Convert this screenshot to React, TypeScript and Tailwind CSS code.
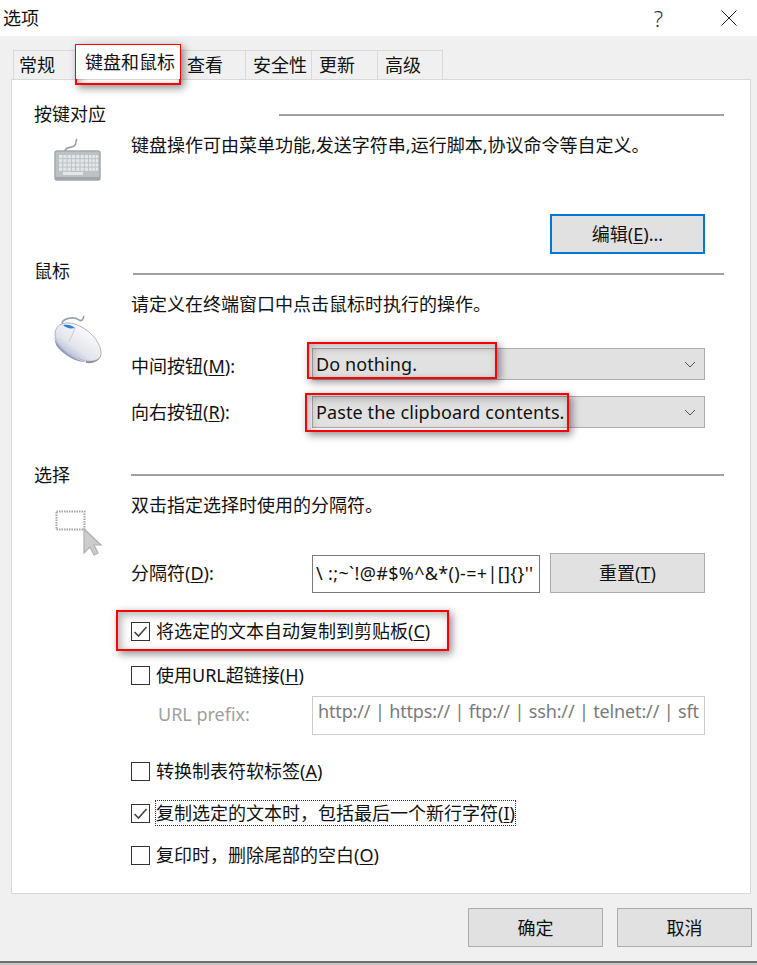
import type { ReactNode } from 'react';

const FONT = "font-['Noto_Sans','Noto_Sans_CJK_SC',sans-serif]";

type TabInfo = {
    label: string;
    width: string;
};

const tabs: TabInfo[] = [
    { label: '查看', width: 'w-[66px]' },
    { label: '安全性', width: 'w-[66px]' },
    { label: '更新', width: 'w-[66px]' },
    { label: '高级', width: 'w-[65px]' },
];

function Key({ children }: { children: ReactNode }) {
    return <span className="underline underline-offset-2 decoration-1">{children}</span>;
}

function KeyboardIcon() {
    return (
        <svg width="48" height="44" viewBox="0 0 48 44">
            <path d="M11 13 C11 9 17 10 20 8 C23 6 21 4 23 1" fill="none" stroke="#9aa0a3" strokeWidth="1.6" />
            <rect x="1" y="13" width="45" height="29" rx="2" fill="#bcc1c4" stroke="#a3a9ac" strokeWidth="1.5" />
            <rect x="1" y="39" width="45" height="3" fill="#9fa5a8" />
            {[0, 1, 2, 3].map(row =>
                [0, 1, 2, 3, 4, 5, 6].map(col => (
                    <rect key={`${row}-${col}`} x={5 + col * 4.3} y={17 + row * 4.2} width="3.3" height="3.2" fill="#e3e6e8" />
                )),
            )}
            {[0, 1, 2, 3].map(row =>
                [0, 1, 2].map(col => (
                    <rect key={`n${row}-${col}`} x={35 + col * 3.3} y={17 + row * 4.2} width="2.6" height="3.2" fill="#e3e6e8" />
                )),
            )}
            <rect x="9" y="34" width="20" height="3" fill="#e3e6e8" />
        </svg>
    );
}

function MouseIcon() {
    return (
        <svg width="52" height="50" viewBox="0 0 52 50">
            <defs>
                <linearGradient id="mouseBody" x1="0.9" y1="0.2" x2="0.2" y2="1">
                    <stop offset="0" stopColor="#ffffff" />
                    <stop offset="0.6" stopColor="#e2e4ec" />
                    <stop offset="1" stopColor="#9aa6c4" />
                </linearGradient>
            </defs>
            <path d="M10 10 C9 3 22 1 27 5 C30 7 31 4 32 1" fill="none" stroke="#9ba0aa" strokeWidth="1.6" />
            <path d="M3 19 C3 9 13 6 23 9 C35 13 48 25 49 37 C50 45 42 47 34 46 C22 44 3 33 3 19 Z" fill="url(#mouseBody)" stroke="#b0b5c4" strokeWidth="1" />
            <path d="M2 22 C6 33 20 44 34 47 C28 48 12 42 4 30 Z" fill="#8f9bbb" />
            <path d="M34 46 C42 47 50 45 49 37 C50 44 44 49 34 48 Z" fill="#8a8f9c" />
            <path d="M11 10 C15 9 20 10 23 13 C18 14 14 13 11 10 Z" fill="#2f7fdc" />
            <path d="M23 13 C21 19 19 22 17 27" fill="none" stroke="#c8cbd4" strokeWidth="1" />
        </svg>
    );
}

function SelectIcon() {
    return (
        <svg width="48" height="46" viewBox="0 0 48 46">
            <rect x="1.5" y="1.5" width="28" height="18" fill="none" stroke="#a4a4a4" strokeWidth="2" strokeDasharray="1.5 1" />
            <path d="M29 19 L29 43 L35 37 L39 45 L43 43 L39 35 L46 35 Z" fill="#cccccc" stroke="#b0b0b0" strokeWidth="1.2" />
        </svg>
    );
}

function Chevron() {
    return (
        <svg width="12" height="7" viewBox="0 0 12 7" className="mr-2">
            <path d="M1 1 L6 6 L11 1" fill="none" stroke="#555555" strokeWidth="1" />
        </svg>
    );
}

function SectionHeader({ title, lineOffset, lineClass }: { title: string; lineOffset: string; lineClass: string }) {
    return (
        <div className="flex h-7 items-center pl-[22px] pr-[26px]">
            <div className={lineOffset}>{title}</div>
            <div className={`h-0.5 flex-1 bg-[#a0a0a0] ${lineClass}`} />
        </div>
    );
}

function Select({ value }: { value: string }) {
    return (
        <div className="ml-auto flex h-8 w-[393px] items-center justify-between border border-[#adadad] bg-[#e1e1e1] pl-[3px]">
            <span className="tracking-[0.1px]">{value}</span>
            <Chevron />
        </div>
    );
}

function Button({ children, className }: { children: ReactNode; className: string }) {
    return (
        <button type="button" className={`flex items-center justify-center bg-[#e1e1e1] ${className}`}>
            {children}
        </button>
    );
}

function Check({ checked, children, className }: { checked?: boolean; children: ReactNode; className: string }) {
    return (
        <div className={`flex h-6 items-center pl-[119px] ${className}`}>
            <div className="flex h-[19px] w-[19px] items-center justify-center border border-[#333333] bg-white">
                {checked && (
                    <svg width="15" height="13" viewBox="0 0 15 13">
                        <path d="M1.5 7 L5.5 11 L13.5 2" fill="none" stroke="#444444" strokeWidth="1.6" />
                    </svg>
                )}
            </div>
            {children}
        </div>
    );
}

function Highlight({ className }: { className: string }) {
    return (
        <div className={`pointer-events-none absolute border-2 border-[#ff0000] shadow-[3px_3px_8px_rgba(0,0,0,0.45),inset_3px_3px_8px_rgba(0,0,0,0.3)] ${className}`} />
    );
}

export default function App() {
    return (
        <div className={`relative flex h-[965px] w-[757px] flex-col overflow-hidden bg-[#f0f0f0] text-[18px] leading-6 text-[#111111] ${FONT}`}>
            <div className="flex h-9 items-center justify-between bg-white pl-[3px]">
                <span>选项</span>
                <div className="flex items-center">
                    <span className="mr-[58px] text-[22px] font-light text-[#333333]">?</span>
                    <svg width="16" height="16" viewBox="0 0 16 16" className="mr-[20px]">
                        <path d="M0.5 0.5 L15.5 15.5 M15.5 0.5 L0.5 15.5" stroke="#222222" strokeWidth="1" />
                    </svg>
                </div>
            </div>

            <div className="mt-[14px] flex h-[29px] items-end pl-[13px]">
                <div className="h-[29px] w-[63px] border border-b-0 border-[#d9d9d9] pl-[5px] leading-[29px]">常规</div>
                <div className="relative z-10 -mt-1 h-[34px] w-[104px] self-end bg-white pl-[9px] leading-[34px]">键盘和鼠标</div>
                {tabs.map(tab => (
                    <div key={tab.label} className={`h-[29px] border border-b-0 border-l-0 border-[#d9d9d9] pl-[7px] leading-[29px] ${tab.width}`}>
                        {tab.label}
                    </div>
                ))}
            </div>

            <div className="ml-[11px] h-[815px] w-[740px] border border-[#d9d9d9] bg-white pt-5">
                <SectionHeader title="按键对应" lineOffset="w-[245px]" lineClass="mt-0.5" />
                <div className="mt-[5px] flex h-[124px]">
                    <div className="w-[119px] pl-[42px] pt-[5px]">
                        <KeyboardIcon />
                    </div>
                    <div className="flex-1 pr-[45px]">
                        <div>键盘操作可由菜单功能,发送字符串,运行脚本,协议命令等自定义。</div>
                        <Button className="ml-auto mt-[57px] h-10 w-[155px] border-2 border-[#0078d7]">
                            <span>编辑(<Key>E</Key>)...</span>
                        </Button>
                    </div>
                </div>

                <SectionHeader title="鼠标" lineOffset="w-[99px]" lineClass="mt-[6px]" />
                <div className="mt-[7px] flex h-[169px]">
                    <div className="w-[119px] pl-[40px] pt-[23px]">
                        <MouseIcon />
                    </div>
                    <div className="flex-1 pr-[45px]">
                        <div>请定义在终端窗口中点击鼠标时执行的操作。</div>
                        <div className="mt-8 flex items-center">
                            <span className="mt-1">中间按钮(<Key>M</Key>):</span>
                            <Select value="Do nothing." />
                        </div>
                        <div className="mt-4 flex items-center">
                            <span>向右按钮(<Key>R</Key>):</span>
                            <Select value="Paste the clipboard contents." />
                        </div>
                    </div>
                </div>

                <SectionHeader title="选择" lineOffset="w-[97px]" lineClass="mt-0" />
                <div className="mt-1 flex h-[100px]">
                    <div className="w-[119px] pl-[43px] pt-[17px]">
                        <SelectIcon />
                    </div>
                    <div className="flex-1 pr-[45px]">
                        <div>双击指定选择时使用的分隔符。</div>
                        <div className="mt-9 flex items-center">
                            <span>分隔符(<Key>D</Key>):</span>
                            <div className="ml-auto mt-0.5 h-[38px] w-[228px] overflow-hidden whitespace-nowrap border border-[#7a7a7a] pl-[3px] leading-[34px] tracking-[0.35px]">
                                {"\\ :;~`!@#$%^&*()-=+|[]{}''"}
                            </div>
                            <Button className="ml-[10px] h-10 w-[155px] shrink-0 border border-[#adadad]">
                                <span>重置(<Key>T</Key>)</span>
                            </Button>
                        </div>
                    </div>
                </div>

                <Check checked className="mt-[26px]">
                    <span className="ml-[6px]">将选定的文本自动复制到剪贴板(<Key>C</Key>)</span>
                </Check>
                <Check className="mt-5">
                    <span className="ml-[6px]">使用URL超链接(<Key>H</Key>)</span>
                </Check>
                <div className="mt-[9px] flex h-[39px] pl-[146px] pr-[45px]">
                    <span className="w-[154px] pt-[6px] text-[#a0a0a0]">URL prefix:</span>
                    <div className="flex-1 overflow-hidden whitespace-nowrap border border-[#cccccc] pl-[5px] pr-[6px] leading-[28px] tracking-[-0.15px] text-[#7a7a7a]">
                        http:// | https:// | ftp:// | ssh:// | telnet:// | sft
                    </div>
                </div>
                <Check className="mt-6">
                    <span className="ml-[6px]">转换制表符软标签(<Key>A</Key>)</span>
                </Check>
                <Check checked className="mt-[18px]">
                    <span className="ml-[5px] border border-dotted border-[#333333]">复制选定的文本时，包括最后一个新行字符(<Key>I</Key>)</span>
                </Check>
                <Check className="mt-[18px]">
                    <span className="ml-[6px]">复印时，删除尾部的空白(<Key>O</Key>)</span>
                </Check>
            </div>

            <div className="mt-[14px] flex justify-end gap-[14px] pr-[5px]">
                <Button className="h-[39px] w-[135px] border border-[#adadad]">确定</Button>
                <Button className="h-[39px] w-[135px] border border-[#adadad]">取消</Button>
            </div>

            <div className="mt-auto h-1 border-t-2 border-[#6e6e6e] bg-[#c8c8c8]" />

            <Highlight className="left-[75px] top-[44px] h-[41px] w-[106px]" />
            <Highlight className="left-[307px] top-[342px] h-[37px] w-[190px]" />
            <Highlight className="left-[305px] top-[393px] h-[39px] w-[264px]" />
            <Highlight className="left-[116px] top-[610px] h-[41px] w-[333px]" />
        </div>
    );
}
